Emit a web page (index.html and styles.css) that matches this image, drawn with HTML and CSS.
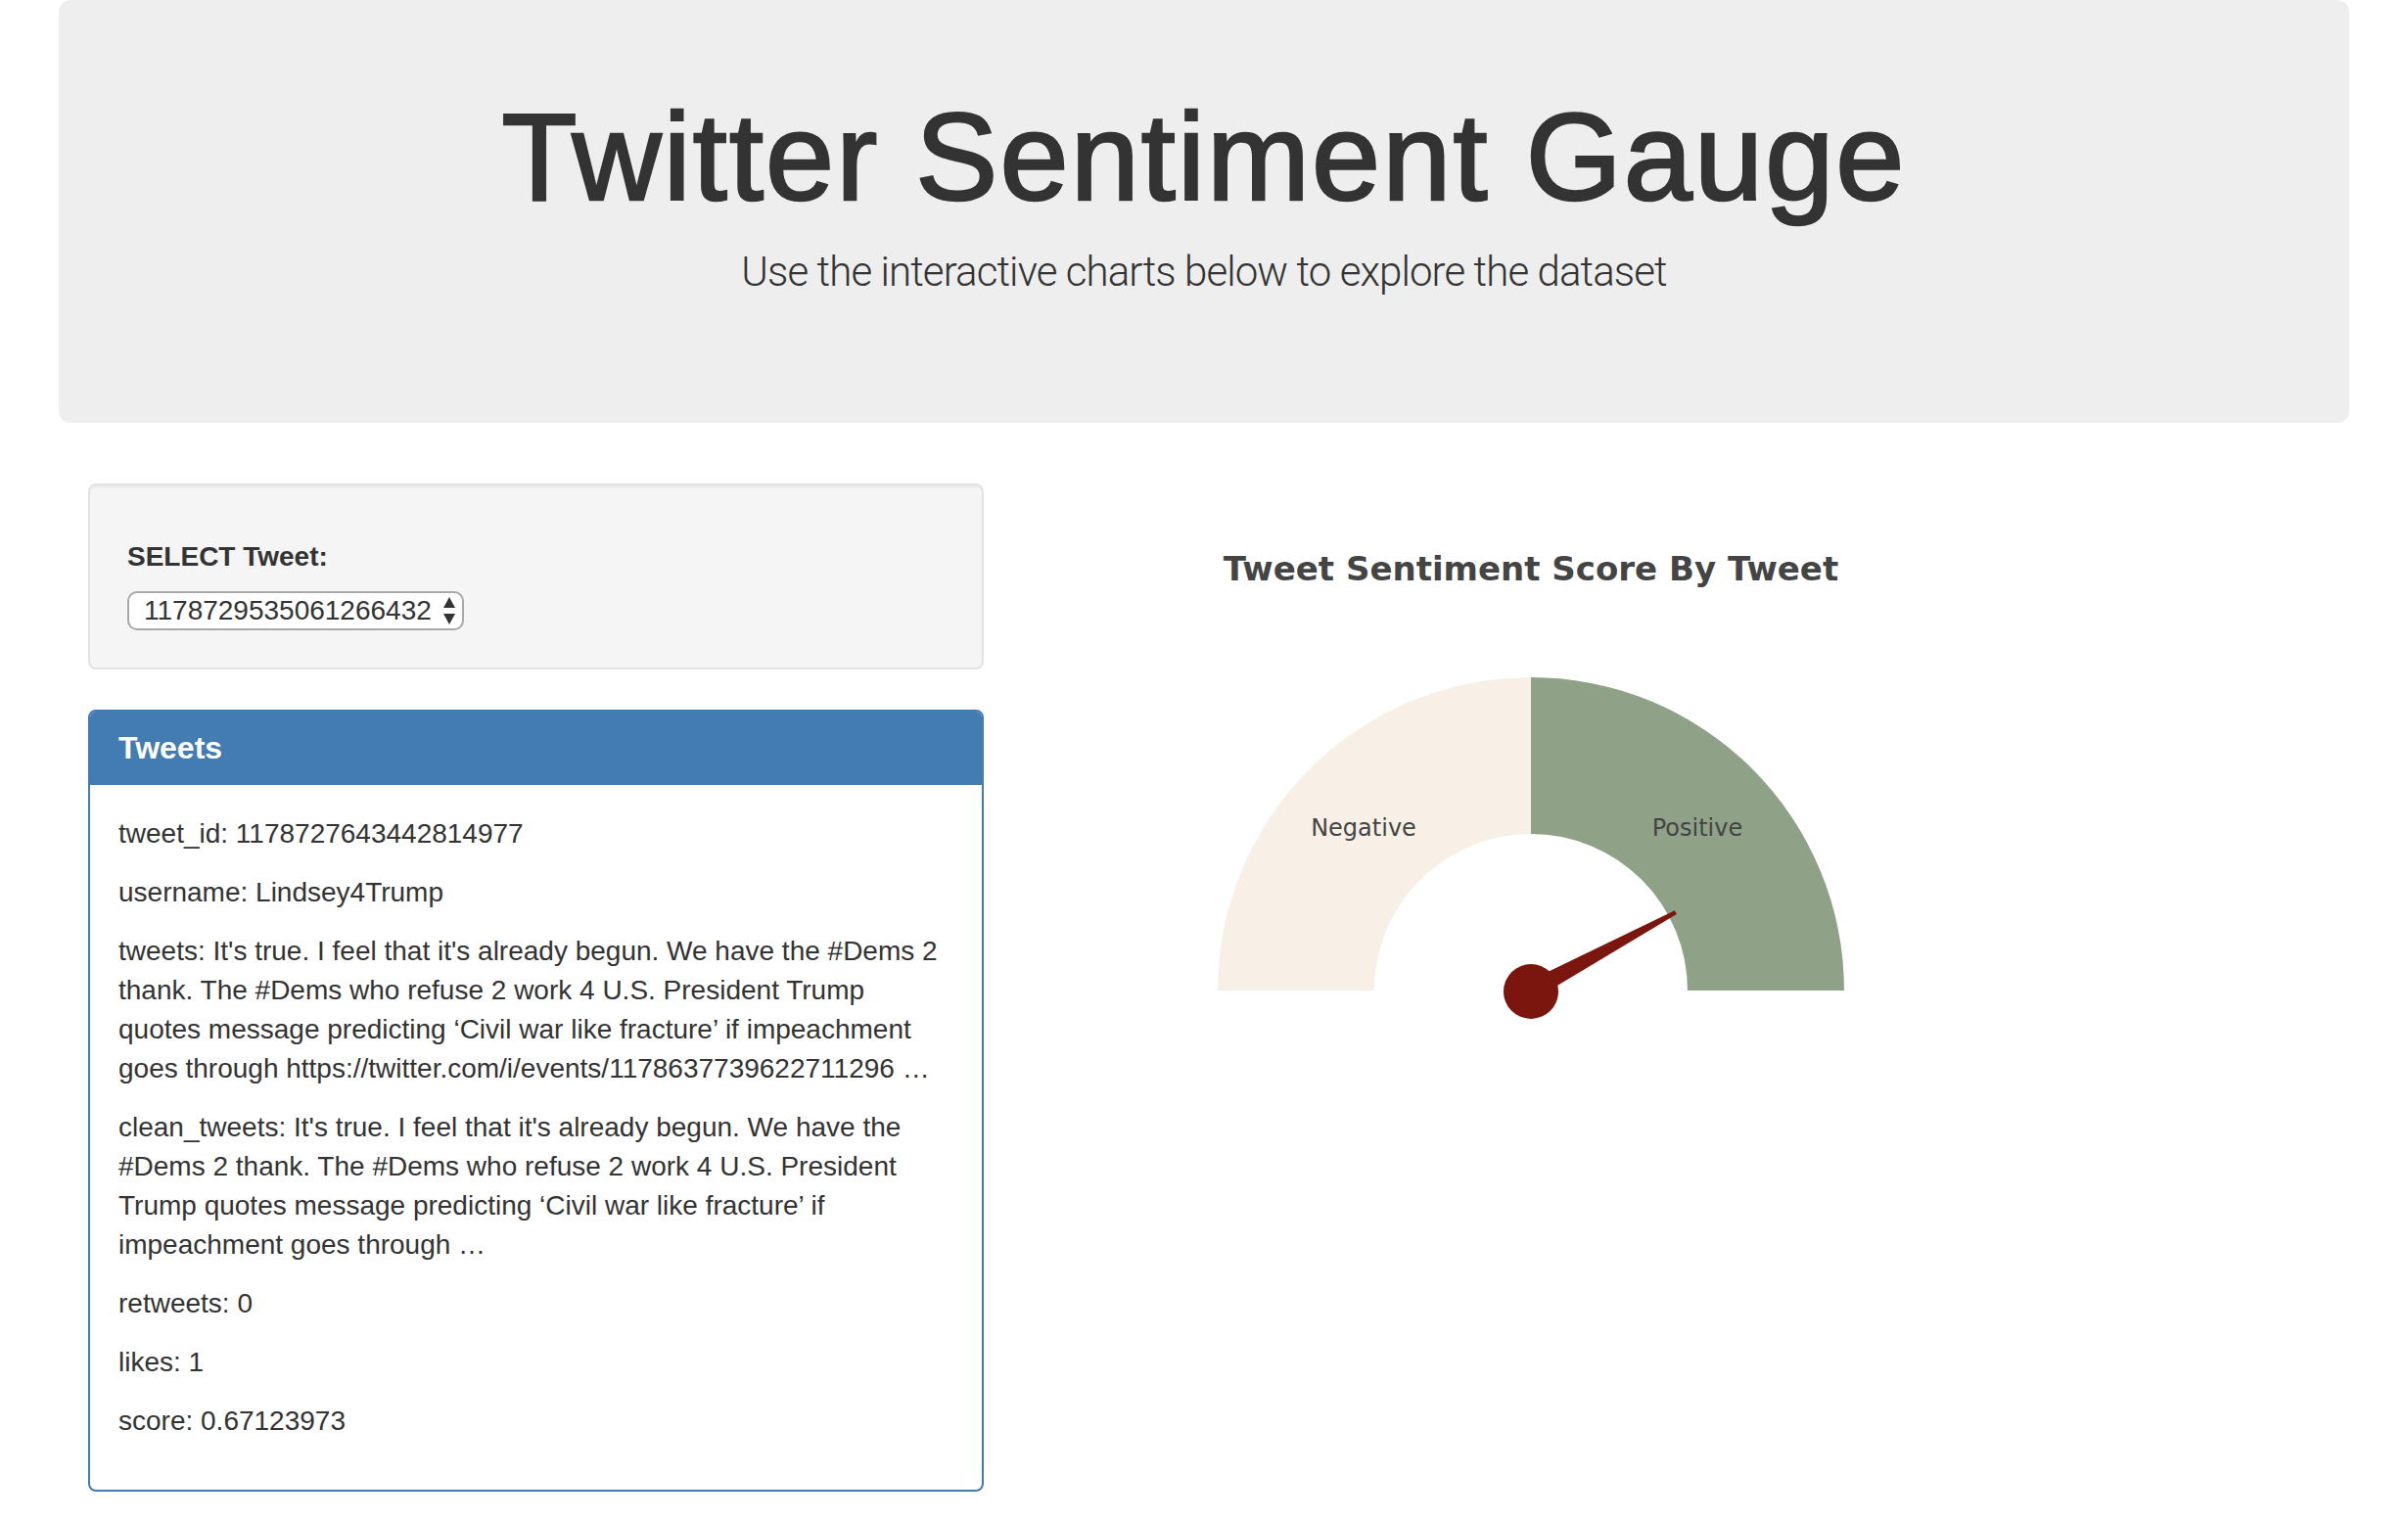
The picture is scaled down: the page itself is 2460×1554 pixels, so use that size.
FILE: index.html
```html
<!DOCTYPE html>
<html lang="en">
<head>
<meta charset="utf-8">
<title>Twitter Sentiment Gauge</title>
<link rel="stylesheet" href="styles.css">
</head>
<body>
<div class="page">
  <header class="jumbotron">
    <h1 class="jumbo-title">Twitter Sentiment Gauge</h1>
    <p class="jumbo-lead">Use the interactive charts below to explore the dataset</p>
  </header>

  <div class="row">
    <div class="col-left">
      <div class="well">
        <label class="control-label" for="tweet-select">SELECT Tweet:</label>
        <div class="select-wrap">
          <select id="tweet-select" class="tweet-select">
            <option>1178729535061266432</option>
          </select>
          <svg class="select-arrows" width="14" height="30" viewBox="0 0 14 30">
            <path d="M7 1 L13 12 L1 12 Z" fill="#333"/>
            <path d="M1 18 L13 18 L7 29 Z" fill="#333"/>
          </svg>
        </div>
      </div>

      <div class="panel">
        <div class="panel-heading">
          <h3 class="panel-title">Tweets</h3>
        </div>
        <div class="panel-body">
          <p>tweet_id: 1178727643442814977</p>
          <p>username: Lindsey4Trump</p>
          <p>tweets: It's true. I feel that it's already begun. We have the #Dems 2 thank. The #Dems who refuse 2 work 4 U.S. President Trump quotes message predicting ‘Civil war like fracture’ if impeachment goes through https://twitter.com/i/events/1178637739622711296 …</p>
          <p>clean_tweets: It's true. I feel that it's already begun. We have the #Dems 2 thank. The #Dems who refuse 2 work 4 U.S. President Trump quotes message predicting ‘Civil war like fracture’ if impeachment goes through …</p>
          <p>retweets: 0</p>
          <p>likes: 1</p>
          <p>score: 0.67123973</p>
        </div>
      </div>
    </div>

    <div class="col-right">
      <svg class="gauge" width="1000" height="560" viewBox="0 0 1000 560">
        <text class="gauge-title" x="500" y="99" text-anchor="middle">Tweet Sentiment Score By Tweet</text>
        <path d="M180 518 A320 320 0 0 1 500 198 L500 358 A160 160 0 0 0 340 518 Z" fill="#f8f0e6"/>
        <path d="M500 198 A320 320 0 0 1 820 518 L660 518 A160 160 0 0 0 500 358 Z" fill="#8fa288"/>
        <text class="gauge-label" x="329" y="360" text-anchor="middle">Negative</text>
        <text class="gauge-label" x="670" y="360" text-anchor="middle">Positive</text>
        <polygon points="495.5,509.6 646.9,436.3 648.8,439.9 504.5,526.4" fill="#7a160e"/>
        <circle cx="500" cy="519" r="28" fill="#7a160e"/>
      </svg>
    </div>
  </div>
</div>
</body>
</html>
```

FILE: styles.css
```css
html, body {
  margin: 0;
  padding: 0;
  background: #fff;
}

body {
  font-family: "Liberation Sans", Arial, sans-serif;
  font-size: 28px;
  line-height: 40px;
  color: #333;
}

.page {
  width: 2340px;
  margin: 0 auto;
}

.jumbotron {
  background: #eeeeee;
  border-radius: 12px;
  padding: 92px 0 124px;
  text-align: center;
  margin-bottom: 62px;
}

.jumbo-title {
  margin: 0;
  font-family: "Liberation Sans", Arial, sans-serif;
  font-size: 126px;
  line-height: 138px;
  font-weight: 400;
  letter-spacing: 2.1px;
  -webkit-text-stroke: 2.5px #333;
  color: #333;
}

.jumbo-lead {
  margin: 18px 0 0;
  font-family: Roboto, "Liberation Sans", sans-serif;
  font-weight: 300;
  font-size: 42px;
  line-height: 60px;
  letter-spacing: -0.9px;
  color: #333;
}

.row {
  display: flex;
}

.col-left {
  box-sizing: border-box;
  width: 975px;
  padding: 0 30px;
}

.col-right {
  box-sizing: border-box;
  width: 1365px;
  padding: 0 30px 0 29px;
}

.well {
  background: #f5f5f5;
  border: 2px solid #e3e3e3;
  border-radius: 8px;
  box-shadow: inset 0 2px 2px rgba(0, 0, 0, 0.05);
  padding: 53px 38px 38px;
}

.control-label {
  display: block;
  font-weight: 700;
  margin-bottom: 15px;
}

.select-wrap {
  position: relative;
  width: 344px;
  height: 40px;
}

.tweet-select {
  -webkit-appearance: none;
  appearance: none;
  box-sizing: border-box;
  width: 344px;
  height: 40px;
  margin: 0;
  padding: 0 0 0 15px;
  border: 2px solid #a9a9a9;
  border-radius: 10px;
  background: #fff;
  font-family: "Liberation Sans", Arial, sans-serif;
  font-size: 28px;
  line-height: 36px;
  color: #333;
}

.select-arrows {
  position: absolute;
  left: 322px;
  top: 5px;
  pointer-events: none;
}

.panel {
  margin-top: 41px;
  border: 2px solid #427cb3;
  border-radius: 8px;
  background: #fff;
  overflow: hidden;
}

.panel-heading {
  background: #427cb3;
  color: #fff;
  padding: 20px 29px;
}

.panel-title {
  margin: 0;
  font-size: 32px;
  line-height: 35px;
  font-weight: 700;
}

.panel-body {
  padding: 30px 32px 30px 29px;
}

.panel-body p {
  margin: 0 0 20px;
}

.gauge {
  display: block;
}

.gauge-title {
  font-family: "DejaVu Sans", Verdana, sans-serif;
  font-weight: 700;
  font-size: 34px;
  fill: #444;
}

.gauge-label {
  font-family: "DejaVu Sans", Verdana, sans-serif;
  font-size: 24px;
  fill: #444;
}
```
